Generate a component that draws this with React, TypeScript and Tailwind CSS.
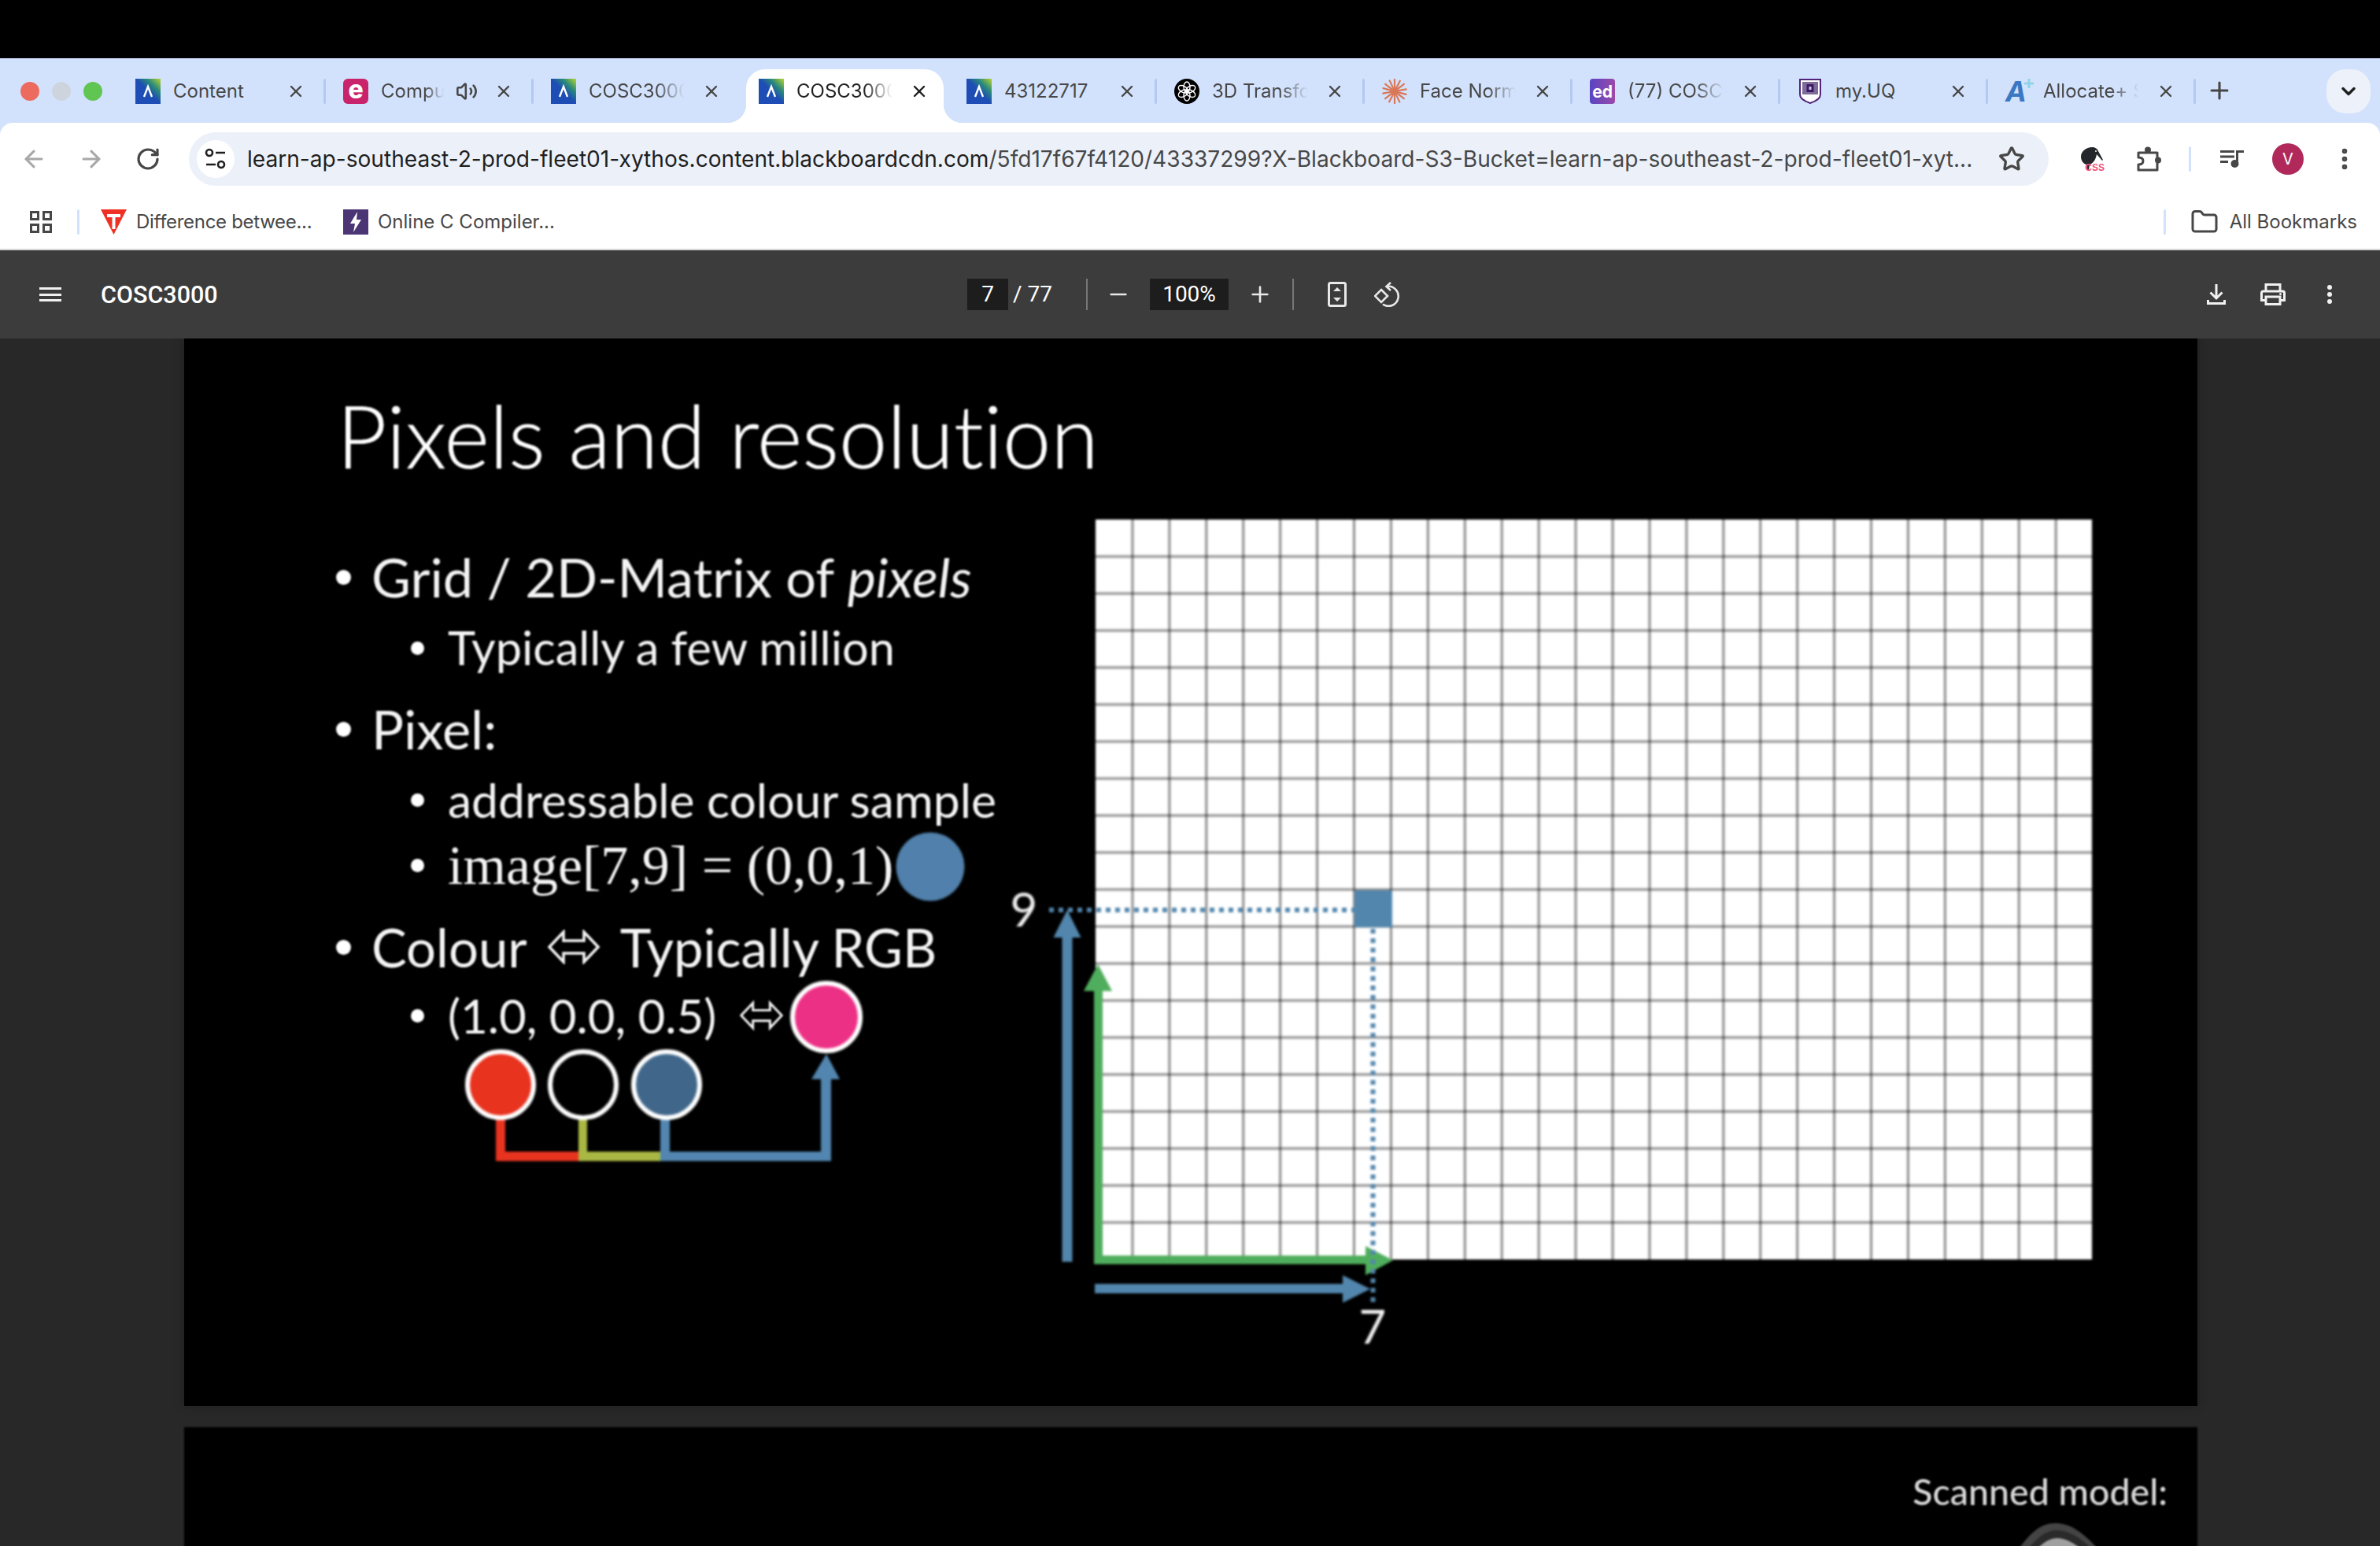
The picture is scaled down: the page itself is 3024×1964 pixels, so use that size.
import { ArrowLeft, ArrowRight, ChevronDown, EllipsisVertical, Folder, Minus, Plus, RotateCw, Star, Volume2, X } from "lucide-react";
import type { ReactNode } from "react";

const BB = () => (
  <div className="w-[32px] h-[32px] flex items-center justify-center bg-[linear-gradient(to_top_right,#1d4db5_50%,#2a8a7a_72%,#b8d62e)]">
    <svg width="16" height="18" viewBox="0 0 16 18"><path d="M3 16 8 3l5 13" fill="none" stroke="#fff" strokeWidth="2.4" /></svg>
  </div>
);

const Echo = () => (
  <div className="w-[32px] h-[32px] rounded-[6px] bg-[#c9236b] flex items-center justify-center text-white text-[32px] font-extrabold leading-none pb-[5px]">e</div>
);

const Knot = () => (
  <svg width="32" height="32" viewBox="0 0 32 32">
    <circle cx="16" cy="16" r="16" fill="#000" />
    {[0, 60, 120, 180, 240, 300].map((r) => (
      <ellipse key={r} cx="16" cy="10.5" rx="4" ry="6.5" fill="none" stroke="#fff" strokeWidth="1.4" transform={`rotate(${r} 16 16)`} />
    ))}
  </svg>
);

const Burst = () => (
  <svg width="32" height="32" viewBox="0 0 32 32">
    {[0, 27, 52, 80, 105, 128, 155].map((r) => (
      <line key={r} x1="16" y1="1" x2="16" y2="31" stroke="#d97757" strokeWidth="2.2" strokeLinecap="round" transform={`rotate(${r} 16 16)`} />
    ))}
  </svg>
);

const Ed = () => (
  <div className="w-[32px] h-[32px] rounded-[4px] bg-[linear-gradient(to_right,#5a45c4,#9b4aa8)] flex items-center justify-center text-white text-[21px] font-bold leading-none">ed</div>
);

const Shield = () => (
  <svg width="28" height="32" viewBox="0 0 28 32">
    <path d="M1 1h26v19c0 6-7 9-13 11C8 29 1 26 1 20z" fill="#fff" stroke="#51247a" strokeWidth="2" />
    <rect x="4" y="4" width="20" height="16" fill="#7d6b9a" />
    <rect x="9.5" y="7" width="9" height="10" fill="#3b1a63" />
    <rect x="12.5" y="10" width="3" height="4" fill="#cfc6de" />
  </svg>
);

const APlus = () => (
  <div className="relative w-[32px] h-[32px]">
    <span className="absolute left-0 top-[-2px] text-[#3b78c4] text-[36px] leading-none font-bold italic">A</span>
    <svg className="absolute right-[-4px] top-0" width="12" height="12" viewBox="0 0 12 12"><path d="M6 0v12M0 6h12" stroke="#8fd3e8" strokeWidth="3" /></svg>
  </div>
);

const tabs: { title: string; icon: ReactNode; active?: boolean; audio?: boolean; sep: boolean; fade?: boolean }[] = [
  { title: "Content", icon: <BB />, sep: true },
  { title: "Compu", icon: <Echo />, audio: true, sep: true, fade: true },
  { title: "COSC3000", icon: <BB />, sep: false, fade: true },
  { title: "COSC3000", icon: <BB />, active: true, sep: false, fade: true },
  { title: "43122717", icon: <BB />, sep: true },
  { title: "3D Transfo", icon: <Knot />, sep: true, fade: true },
  { title: "Face Norm", icon: <Burst />, sep: true, fade: true },
  { title: "(77) COSC", icon: <Ed />, sep: true, fade: true },
  { title: "my.UQ", icon: <Shield />, sep: true },
  { title: "Allocate+ S", icon: <APlus />, sep: true, fade: true },
];

function Tab({ t }: { t: (typeof tabs)[number] }) {
  return (
    <div className="relative w-[264px] h-[68px] flex items-start pt-[12px] shrink-0">
      {t.active && (
        <div className="absolute left-[6px] right-[7px] top-0 bottom-0 bg-white rounded-t-[24px]">
          <span className="absolute left-[-24px] bottom-0 w-[24px] h-[24px] bg-[radial-gradient(circle_at_0_0,transparent_24px,#ffffff_24.5px)]" />
          <span className="absolute right-[-24px] bottom-0 w-[24px] h-[24px] bg-[radial-gradient(circle_at_100%_0,transparent_24px,#ffffff_24.5px)]" />
        </div>
      )}
      <div className="relative flex items-center h-[32px] w-full">
        <div className="ml-[22px] w-[32px] flex justify-center shrink-0">{t.icon}</div>
        <div
          className={`ml-[16px] overflow-hidden whitespace-nowrap text-[24px] leading-[32px] ${t.audio ? "w-[80px]" : "w-[122px]"} ${t.active ? "text-[#1f1f1f]" : "text-[#474747]"} ${t.fade ? "[mask-image:linear-gradient(to_right,black_70%,transparent)]" : ""}`}
        >
          {t.title}
        </div>
        {t.audio && <Volume2 className="ml-[15px] text-[#474747] shrink-0" size={28} strokeWidth={2.2} />}
        <X className={`${t.audio ? "ml-[21px]" : "ml-[22px]"} shrink-0 ${t.active ? "text-[#1f1f1f]" : "text-[#474747]"}`} size={24} strokeWidth={2.4} />
        {t.sep && <div className="ml-auto w-[3px] h-[32px] bg-[#b3c9f3] rounded-full" />}
      </div>
    </div>
  );
}

const Tune = () => (
  <svg width="28" height="30" viewBox="0 0 28 30" fill="none" stroke="#1f1f1f" strokeWidth="2.6">
    <circle cx="6" cy="7" r="4" />
    <path d="M14 7h12M2 22h12" />
    <circle cx="21" cy="22" r="4" />
  </svg>
);

const Kiwi = () => (
  <div className="relative w-[30px] h-[30px]">
    <svg width="30" height="30" viewBox="0 0 30 30" className="absolute left-0 top-0">
      <path d="M1 12C1 5 8 0 15 0c4 0 7 2 8 5l6 11-1 1-7-8c-1 7-5 12-9 13l-1 7H9l-1-7C4 21 1 17 1 12z" fill="#23262b" />
      <circle cx="20" cy="5" r="1" fill="#fff" />
    </svg>
    <span className="absolute right-[-1px] bottom-[-1px] text-[12px] leading-[10px] font-bold text-[#ef4f7f] [font-family:'Liberation_Sans',sans-serif]">CSS</span>
  </div>
);

const Ext = () => (
  <svg width="32" height="32" viewBox="0 0 32 32" fill="none" stroke="#474747" strokeWidth="3" strokeLinejoin="round">
    <path d="M3 8H27V30H3V23C7 23 9 21 9 18.500S7 14 3 14Z" />
    <circle cx="15" cy="4.500" r="4" fill="#474747" stroke="none" />
    <circle cx="28" cy="17.500" r="4" fill="#474747" stroke="none" />
  </svg>
);

const Queue = () => (
  <svg width="30" height="22" viewBox="0 0 30 22" fill="#474747">
    <rect x="0" y="0" width="18" height="3" />
    <rect x="0" y="6.500" width="18" height="3" />
    <rect x="0" y="13" width="10" height="3" />
    <rect x="20" y="0" width="3" height="17" />
    <rect x="20" y="0" width="10" height="3" />
    <circle cx="18.500" cy="17" r="5" />
  </svg>
);

const Apps = () => (
  <svg width="28" height="28" viewBox="0 0 28 28" fill="none" stroke="#474747" strokeWidth="3">
    <rect x="1.5" y="1.5" width="9" height="9" />
    <rect x="17.5" y="1.5" width="9" height="9" />
    <rect x="1.5" y="17.5" width="9" height="9" />
    <rect x="17.5" y="17.5" width="9" height="9" />
  </svg>
);

const RedT = () => (
  <svg width="33" height="32" viewBox="0 0 33 32">
    <path d="M0 0h33L16.5 32z" fill="#ee3124" />
    <path d="M8 6h17v4h-6.5v15h-4V10H8z" fill="#fff" />
  </svg>
);

const Bolt = () => (
  <div className="w-[32px] h-[32px] bg-[#4b3574] flex items-center justify-center">
    <svg width="18" height="26" viewBox="0 0 18 26"><path d="M11 0 2 15h6l-2 11 10-16h-6z" fill="#fff" /></svg>
  </div>
);

const FitPage = () => (
  <svg width="24" height="32" viewBox="0 0 24 32">
    <rect x="1.5" y="1.5" width="21" height="29" rx="2" fill="none" stroke="#e8e8e8" strokeWidth="3" />
    <path d="M12 7l5 5H7zM12 25l-5-5h10z" fill="#e8e8e8" />
  </svg>
);

const RotateLeft = () => (
  <svg width="33" height="32" viewBox="0 0 33 32" fill="none" stroke="#e8e8e8" strokeWidth="2.6">
    <path d="M9 10l8 8-8 8-8-8z" />
    <path d="M16 6A12.500 12.500 0 1 1 11 28.500" />
    <path d="M21 1l-5.500 5 5.500 5" />
  </svg>
);

const Save = () => (
  <svg width="24" height="26" viewBox="0 0 24 26" fill="none" stroke="#f1f1f1" strokeWidth="3">
    <path d="M12 0v18M4.500 10.500l7.500 7.500 7.500-7.500M1.500 20v4.500h21V20" />
  </svg>
);

const Print = () => (
  <svg width="32" height="28" viewBox="0 0 32 28" fill="none" stroke="#f1f1f1" strokeWidth="3">
    <path d="M7 10V1.500h18V10" />
    <path d="M7 21.500H1.500V12a2 2 0 0 1 2-2h25a2 2 0 0 1 2 2v9.500H25" />
    <rect x="7" y="17" width="18" height="9.500" />
    <circle cx="25.500" cy="13.500" r="1.500" fill="#f1f1f1" stroke="none" />
  </svg>
);

const More = () => (
  <svg width="8" height="26" viewBox="0 0 8 26" fill="#f1f1f1">
    <circle cx="4" cy="4" r="3" />
    <circle cx="4" cy="13" r="3" />
    <circle cx="4" cy="22" r="3" />
  </svg>
);

const Swap = ({ w, h }: { w: number; h: number }) => (
  <svg width={w} height={h} viewBox="0 0 66 44" fill="none" stroke="#f2f2f2" strokeWidth="3.5" strokeLinejoin="miter" className="shrink-0">
    <path d="M2 22 20 3v11h26V3l18 19-18 19V30H20v11z" />
  </svg>
);

const Dot = ({ big }: { big: boolean }) => <span className={`shrink-0 rounded-full bg-white ${big ? "w-[19px] h-[19px]" : "w-[17px] h-[17px]"}`} />;

function Row({ big, gap, children }: { big?: boolean; gap: string; children: ReactNode }) {
  return (
    <div className={`${gap} h-[80px] flex items-center whitespace-nowrap text-[#f4f4f4] ${big ? "pl-[193px] gap-[26px] text-[68.5px]" : "pl-[288px] gap-[30px] text-[60px]"}`}>
      <Dot big={!!big} />
      {children}
    </div>
  );
}

const cols = Array.from({ length: 28 }, (_, i) => 1392 + i * 46.93);
const rows = Array.from({ length: 21 }, (_, i) => 660 + i * 47);

function Diagram() {
  return (
    <svg className="absolute inset-0" width="2558" height="1356" viewBox="234 430 2558 1356">
      <rect x="1392" y="660" width="1266" height="940" fill="#fff" />
      {cols.slice(1, -1).map((x) => (
        <line key={x} x1={x} y1="660" x2={x} y2="1600" stroke="#000" strokeOpacity="0.45" strokeWidth="3" />
      ))}
      {rows.slice(1, -1).map((y) => (
        <line key={y} x1="1392" y1={y} x2="2658" y2={y} stroke="#000" strokeOpacity="0.45" strokeWidth="3" />
      ))}
      <rect x="1721" y="1131" width="48" height="47" fill="#5286ad" />
      <path d="M1333 1156H1721" stroke="#5286ad" strokeWidth="6" strokeDasharray="6 6" />
      <path d="M1349.5 1603V1191h-11l17.500-35 17.500 35h-11V1603z" fill="#5286ad" />
      <path d="M1390 1606V1259h-13l18-34 18 34h-12v336h334v-12l35 18-35 19v-14z" fill="#4fae5d" />
      <path d="M1391 1631h315v-11l35 17.500-35 17.500v-12h-315z" fill="#5286ad" />
      <path d="M1744.500 1180V1656" stroke="#5286ad" strokeWidth="6" strokeDasharray="6 6" />
      <text x="1301" y="1177" fontSize="60" textAnchor="middle" fill="#f2f2f2">9</text>
      <text x="1744" y="1707" fontSize="60" textAnchor="middle" fill="#f2f2f2">7</text>

      <circle cx="1182" cy="1101" r="43.500" fill="#5080ab" />

      <circle cx="1050" cy="1292" r="43" fill="#ec3085" stroke="#fff" strokeWidth="6" />
      <path d="M630 1420h12v43h93v12H630z" fill="#e8331f" />
      <path d="M735 1420h11v43h93v12H735z" fill="#a9b843" />
      <path d="M839 1420h12v43h192v-92h-12l19-32 17 32h-11v104H839z" fill="#5286b0" />
      <circle cx="636" cy="1378" r="42" fill="#e8331f" stroke="#fff" strokeWidth="6" />
      <circle cx="741" cy="1378" r="42" fill="#000" stroke="#fff" strokeWidth="6" />
      <circle cx="847" cy="1378" r="42" fill="#40678a" stroke="#fff" strokeWidth="6" />
    </svg>
  );
}

export default function App() {
  return (
    <div className="w-[3024px] h-[1964px] overflow-hidden bg-black flex flex-col [font-family:Inter,sans-serif]">
      <div className="h-[74px] shrink-0" />

      {/* tab strip */}
      <div className="h-[82px] shrink-0 bg-[#d3e2fc] flex items-start pt-[14px] relative">
        <div className="w-[150px] h-[56px] flex items-center shrink-0 pl-[26px] gap-[16px]">
          <span className="w-[24px] h-[24px] rounded-full bg-[#ec6a5e]" />
          <span className="w-[24px] h-[24px] rounded-full bg-[#ced4dd]" />
          <span className="w-[24px] h-[24px] rounded-full bg-[#61c554]" />
        </div>
        {tabs.map((t, i) => (
          <Tab key={i} t={t} />
        ))}
        <Plus className="ml-[13px] mt-[10px] text-[#474747] shrink-0" size={34} strokeWidth={2.2} />
        <div className="ml-[119px] w-[56px] h-[56px] rounded-[24px] bg-[#ecf1fa] flex items-center justify-center shrink-0">
          <ChevronDown className="text-[#1f1f1f]" size={28} strokeWidth={3} />
        </div>
      </div>

      {/* address row */}
      <div className="bg-[#d3e2fc] shrink-0">
        <div className="h-[80px] bg-white rounded-t-[16px] flex items-center pt-[12px]">
          <ArrowLeft className="ml-[26px] text-[#a8a8a8]" size={34} strokeWidth={2.2} />
          <ArrowRight className="ml-[39px] text-[#a8a8a8]" size={34} strokeWidth={2.2} />
          <RotateCw className="ml-[39px] text-[#474747]" size={32} strokeWidth={2.4} />
          <div className="ml-[36px] w-[2363px] h-[68px] rounded-full bg-[#ecf1f9] flex items-center pl-[10px]">
            <div className="w-[48px] h-[48px] rounded-full bg-white flex items-center justify-center shrink-0">
              <Tune />
            </div>
            <div className="ml-[16px] w-[2200px] text-[28.1px] whitespace-nowrap overflow-hidden text-[#474747]">
              <span className="text-[#1f1f1f]">learn-ap-southeast-2-prod-fleet01-xythos.content.blackboardcdn.com</span>
              /5fd17f67f4120/43337299?X-Blackboard-S3-Bucket=learn-ap-southeast-2-prod-fleet01-xyt...
            </div>
            <Star className="ml-[25px] text-[#474747] shrink-0" size={34} strokeWidth={2.4} />
          </div>
          <div className="ml-[40px] shrink-0"><Kiwi /></div>
          <div className="ml-[41px] shrink-0"><Ext /></div>
          <div className="ml-[35px] w-[3px] h-[32px] bg-[#d3e2fc] rounded-full shrink-0" />
          <div className="ml-[37px] shrink-0"><Queue /></div>
          <div className="ml-[36px] w-[40px] h-[40px] rounded-full bg-[#b0295a] text-white text-[20px] flex items-center justify-center shrink-0">V</div>
          <EllipsisVertical className="ml-[35px] text-[#474747] shrink-0" size={34} strokeWidth={2.6} />
        </div>
      </div>

      {/* bookmarks */}
      <div className="h-[80px] shrink-0 bg-white flex items-center pt-[12px] text-[24px] text-[#474747]">
        <div className="ml-[38px]"><Apps /></div>
        <div className="ml-[32px] w-[3px] h-[32px] bg-[#d3e2fc] rounded-full" />
        <div className="ml-[27px]"><RedT /></div>
        <span className="ml-[12px] w-[224px] whitespace-nowrap tracking-[-0.3px]">Difference betwee...</span>
        <div className="ml-[39px]"><Bolt /></div>
        <span className="ml-[12px] w-[224px] whitespace-nowrap">Online C Compiler...</span>
        <div className="ml-auto w-[3px] h-[32px] bg-[#d3e2fc] rounded-full" />
        <Folder className="ml-[31px] text-[#474747]" size={36} strokeWidth={2} />
        <span className="ml-[14px] mr-[29px] whitespace-nowrap">All Bookmarks</span>
      </div>
      <div className="h-[2px] shrink-0 bg-[#d6d6d6]" />

      {/* pdf toolbar */}
      <div className="h-[112px] shrink-0 bg-[#3c3c3c] flex items-center text-white [font-family:Roboto,sans-serif]">
        <div className="ml-[50px] w-[28px] h-[18px] flex flex-col justify-between shrink-0">
          <span className="h-[3px] bg-[#f1f1f1]" />
          <span className="h-[3px] bg-[#f1f1f1]" />
          <span className="h-[3px] bg-[#f1f1f1]" />
        </div>
        <span className="ml-[50px] w-[1101px] text-[30.5px] font-medium pt-[2px]">COSC3000</span>
        <div className="w-[52px] h-[40px] bg-[#1d1d1d] flex items-center justify-center text-[28px]">7</div>
        <span className="ml-[6px] w-[93px] text-[28px]">/ 77</span>
        <div className="w-[2px] h-[40px] bg-[#777]" />
        <Minus className="ml-[23px] text-[#e8e8e8]" size={32} strokeWidth={2} />
        <div className="ml-[24px] w-[100px] h-[40px] bg-[#1d1d1d] flex items-center justify-center text-[28px]">100%</div>
        <Plus className="ml-[24px] text-[#e8e8e8]" size={32} strokeWidth={2} />
        <div className="ml-[25px] w-[2px] h-[40px] bg-[#777]" />
        <div className="ml-[43px]"><FitPage /></div>
        <div className="ml-[35px]"><RotateLeft /></div>
        <div className="ml-[1025px]"><Save /></div>
        <div className="ml-[44px]"><Print /></div>
        <div className="ml-[52px]"><More /></div>
      </div>

      {/* pdf pages */}
      <div className="flex-1 min-h-0 overflow-hidden bg-[#282828] pl-[234px] flex flex-col gap-[27px] [font-family:Lato,sans-serif] [font-variant-ligatures:none]">
        <div className="relative w-[2558px] h-[1356px] shrink-0 bg-black overflow-hidden shadow-[0_0_12px_rgba(0,0,0,0.25)]">
          <div className="absolute inset-0 blur-[1.4px]">
            <Diagram />
          </div>
          <div className="relative blur-[0.8px]">
            <div className="pl-[194px] pt-[58px] h-[263px] text-[109.8px] leading-[130px] font-light text-white whitespace-nowrap [-webkit-text-stroke:0.7px_white]">Pixels and resolution</div>
            <Row big gap="mt-0">
              <span>Grid / 2D-Matrix of <i>pixels</i></span>
            </Row>
            <Row gap="mt-[10px]">
              <span className="text-[59.5px]">Typically a few million</span>
            </Row>
            <Row big gap="mt-[23px]">
              <span>Pixel:</span>
            </Row>
            <Row gap="mt-[10px]">
              <span className="text-[60.6px]">addressable colour sample</span>
            </Row>
            <Row gap="mt-[3px]">
              <span className="text-[70px] [font-family:'Liberation_Serif',serif]">image[7,9] = (0,0,1)</span>
            </Row>
            <Row big gap="mt-[24px]">
              <span className="text-[67px]">Colour</span>
              <Swap w={66} h={44} />
              <span className="text-[67px]">Typically RGB</span>
            </Row>
            <Row gap="mt-[7px]">
              <span>(1.0, 0.0, 0.5)</span>
              <Swap w={55} h={40} />
            </Row>
          </div>
        </div>

        <div className="relative w-[2558px] h-[400px] shrink-0 bg-black overflow-hidden blur-[0.8px]">
          <div className="pt-[54px] pr-[38px] text-right text-[46.5px] leading-[54px] font-medium text-[#d8d8d8]">Scanned model:</div>
          <svg className="absolute left-[2326px] top-[117px]" width="110" height="40" viewBox="0 0 110 40">
            <path d="M6 36C20 18 32 5 52 5s36 14 52 31z" fill="#444" />
            <path d="M18 36C30 22 40 14 54 14s30 10 42 22z" fill="#2a2a2a" />
            <path d="M30 36C38 28 46 24 54 24s18 4 28 12z" fill="#a0a0a0" />
          </svg>
        </div>
      </div>
    </div>
  );
}
